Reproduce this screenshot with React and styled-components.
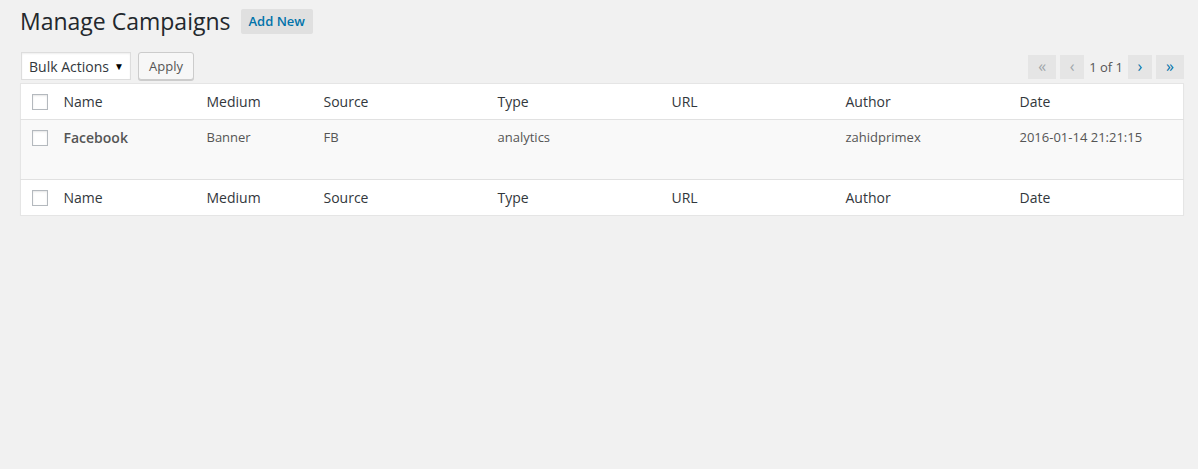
import React from 'react';
import styled, { createGlobalStyle } from 'styled-components';

const GlobalStyle = createGlobalStyle`
    html, body {
        margin: 0;
        padding: 0;
        background: #f1f1f1;
        font-family: "Open Sans", "Liberation Sans", sans-serif;
        color: #444;
    }
`;

const Wrap = styled.div`
    padding: 8px 14px 0 20px;
`;

const TitleRow = styled.div`
    display: flex;
    align-items: center;
    gap: 10px;
    height: 26px;
`;

const Title = styled.h1`
    margin: 0;
    font-size: 23px;
    font-weight: 400;
    line-height: 26px;
    color: #23282d;
`;

const AddNew = styled.a`
    display: inline-flex;
    align-items: center;
    height: 25px;
    padding: 0 8px;
    background: #e0e0e0;
    border-radius: 2px;
    color: #0073aa;
    font-size: 13px;
    font-weight: 600;
    text-decoration: none;
`;

const NavBar = styled.div`
    display: flex;
    align-items: center;
    justify-content: space-between;
    margin-top: 18px;
    height: 28px;
`;

const Actions = styled.div`
    display: flex;
    gap: 7px;
    align-items: center;
    padding-left: 1px;
`;

const Select = styled.div`
    box-sizing: border-box;
    width: 110px;
    height: 28px;
    display: flex;
    align-items: center;
    justify-content: space-between;
    padding: 0 6px 0 7px;
    background: #fff;
    border: 1px solid #ddd;
    box-shadow: inset 0 1px 2px rgba(0, 0, 0, 0.07);
    font-size: 14px;
    color: #32373c;
`;

const Caret = styled.span`
    font-size: 10px;
    color: #000;
`;

const Button = styled.button`
    box-sizing: border-box;
    height: 28px;
    padding: 0 10px;
    background: #f7f7f7;
    border: 1px solid #ccc;
    border-radius: 3px;
    box-shadow: 0 1px 0 #ccc;
    font-family: inherit;
    font-size: 13px;
    color: #555;
`;

const Pager = styled.div`
    display: flex;
    align-items: center;
    gap: 4px;
    margin-top: 1px;
`;

const PageBtn = styled.span`
    box-sizing: border-box;
    width: ${(p) => (p.$wide ? 28 : 24)}px;
    height: 24px;
    display: flex;
    align-items: center;
    justify-content: center;
    background: #e5e5e5;
    color: ${(p) => (p.$off ? '#a0a5aa' : '#0073aa')};
    font-size: 16px;
    line-height: 1;
    padding-bottom: 2px;
`;

const PageText = styled.span`
    font-size: 13px;
    color: #555;
    margin: 0 1px;
`;

const Table = styled.table`
    margin-top: 3px;
    width: 1164px;
    border-collapse: collapse;
    table-layout: fixed;
    background: #fff;
    border: 1px solid #e5e5e5;
    box-shadow: 0 1px 1px rgba(0, 0, 0, 0.04);
`;

const Col = styled.col`
    width: ${(p) => p.$w}px;
`;

const Head = styled.th`
    text-align: left;
    font-weight: 400;
    font-size: 14px;
    color: #32373c;
    height: 35px;
    padding: 0 10px;
    vertical-align: middle;
    border-${(p) => (p.$foot ? 'top' : 'bottom')}: 1px solid #e1e1e1;
`;

const Row = styled.tr`
    background: #f9f9f9;
`;

const Cell = styled.td`
    font-size: 13px;
    color: #555;
    height: 60px;
    padding: 8px 10px 0;
    vertical-align: top;
    box-sizing: border-box;
`;

const NameCell = styled(Cell)`
    font-size: 14px;
    font-weight: 600;
    padding-top: 8px;
`;

const CheckCol = styled.th`
    padding: 0 0 0 11px;
    vertical-align: ${(p) => (p.$top ? 'top' : 'middle')};
    padding-top: ${(p) => (p.$top ? '10px' : '0')};
    border-${(p) => (p.$foot ? 'top' : 'bottom')}: ${(p) => (p.$plain ? '0' : '1px solid #e1e1e1')};
`;

const Check = styled.span`
    display: block;
    box-sizing: border-box;
    width: 16px;
    height: 16px;
    background: #fff;
    border: 1px solid #b4b9be;
    box-shadow: inset 0 1px 2px rgba(0, 0, 0, 0.1);
`;

const columns = [
    { label: 'Name', width: 143 },
    { label: 'Medium', width: 117 },
    { label: 'Source', width: 174 },
    { label: 'Type', width: 174 },
    { label: 'URL', width: 174 },
    { label: 'Author', width: 174 },
    { label: 'Date', width: 174 }
];

const campaign = {
    name: 'Facebook',
    medium: 'Banner',
    source: 'FB',
    type: 'analytics',
    url: '',
    author: 'zahidprimex',
    date: '2016-01-14 21:21:15'
};

function HeaderRow({ foot }) {
    return (
        <tr>
            <CheckCol $foot={foot}><Check /></CheckCol>
            {columns.map((c) => (
                <Head key={c.label} $foot={foot}>{c.label}</Head>
            ))}
        </tr>
    );
}

function App() {
    return (
        <>
            <GlobalStyle />
            <Wrap>
                <TitleRow>
                    <Title>Manage Campaigns</Title>
                    <AddNew href="#">Add New</AddNew>
                </TitleRow>
                <NavBar>
                    <Actions>
                        <Select>Bulk Actions <Caret>▼</Caret></Select>
                        <Button>Apply</Button>
                    </Actions>
                    <Pager>
                        <PageBtn $wide $off>«</PageBtn>
                        <PageBtn $off>‹</PageBtn>
                        <PageText>1 of 1</PageText>
                        <PageBtn>›</PageBtn>
                        <PageBtn $wide>»</PageBtn>
                    </Pager>
                </NavBar>
                <Table>
                    <colgroup>
                        <Col $w={33} />
                        {columns.map((c) => <Col key={c.label} $w={c.width} />)}
                    </colgroup>
                    <thead>
                        <HeaderRow />
                    </thead>
                    <tbody>
                        <Row>
                            <CheckCol $top $plain><Check /></CheckCol>
                            <NameCell>{campaign.name}</NameCell>
                            <Cell>{campaign.medium}</Cell>
                            <Cell>{campaign.source}</Cell>
                            <Cell>{campaign.type}</Cell>
                            <Cell>{campaign.url}</Cell>
                            <Cell>{campaign.author}</Cell>
                            <Cell>{campaign.date}</Cell>
                        </Row>
                    </tbody>
                    <tfoot>
                        <HeaderRow foot />
                    </tfoot>
                </Table>
            </Wrap>
        </>
    );
}

export default App;
